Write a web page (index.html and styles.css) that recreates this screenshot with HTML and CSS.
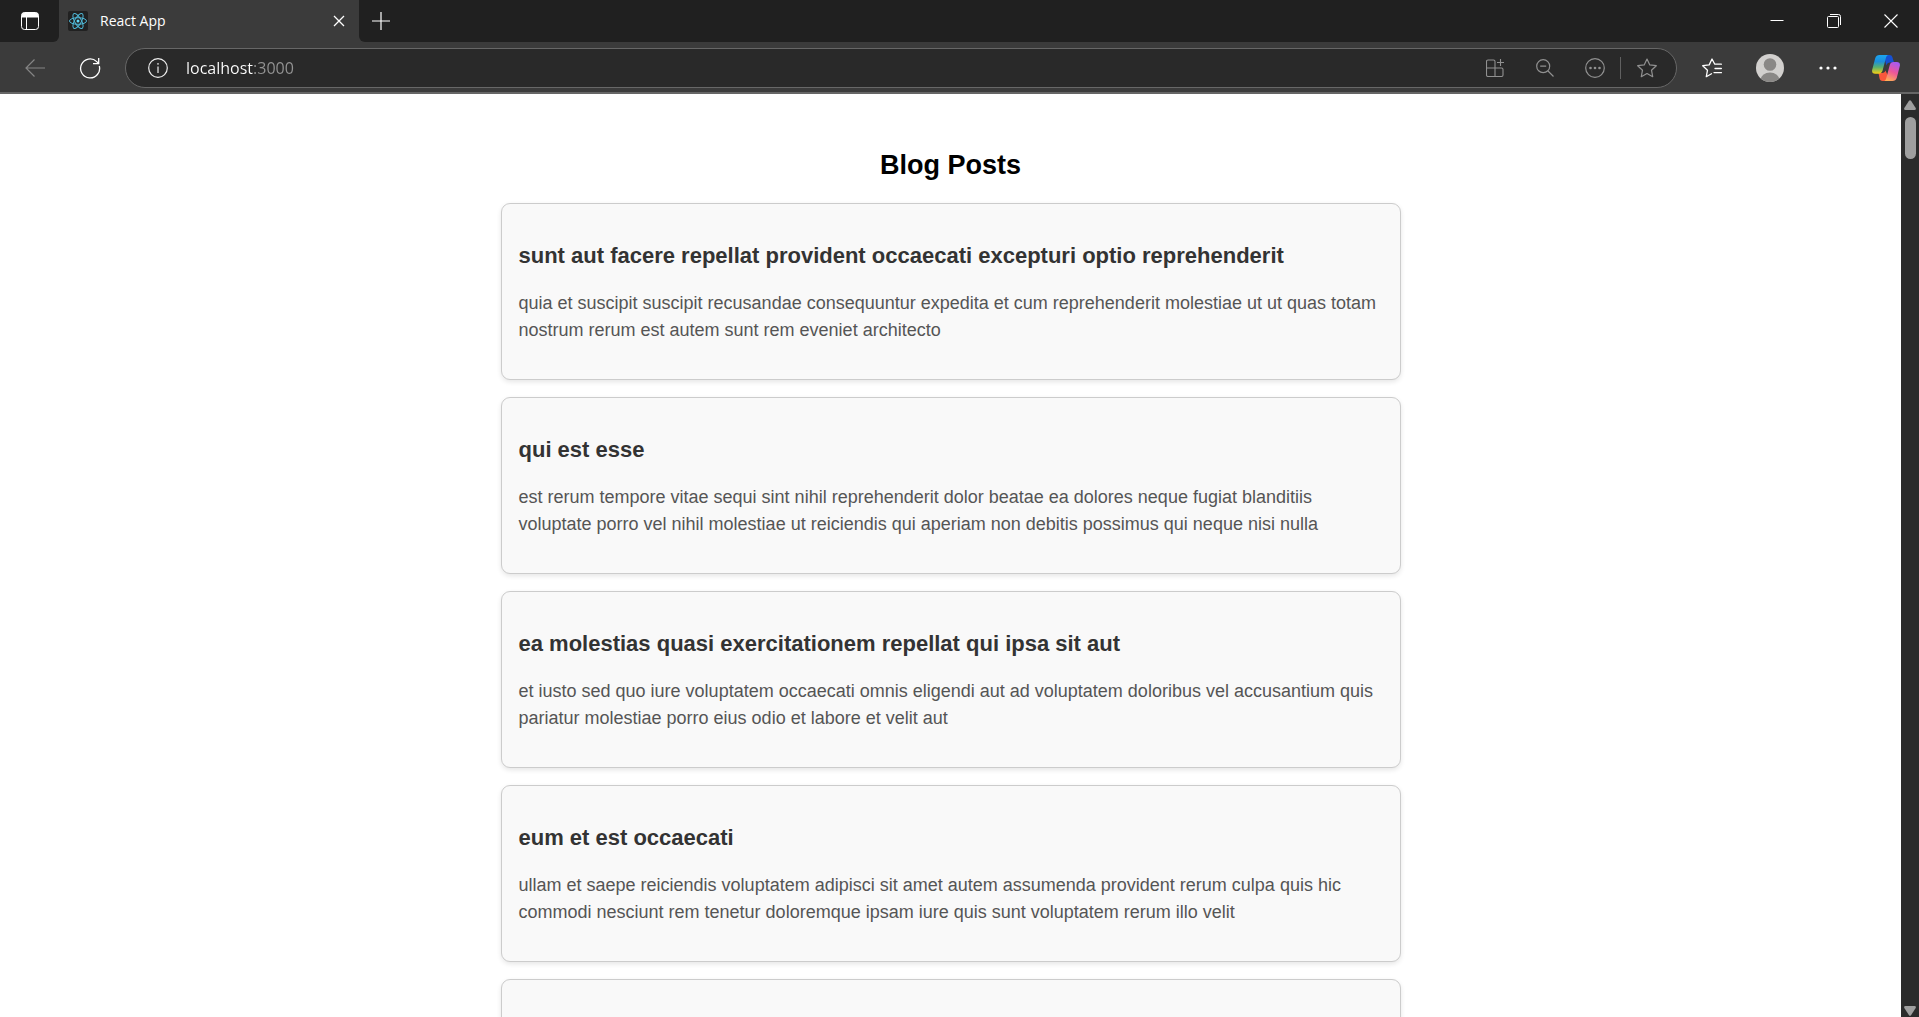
FILE: index.html
```html
<!DOCTYPE html>
<html lang="en">
<head>
<meta charset="utf-8">
<title>React App</title>
<link rel="stylesheet" href="styles.css">
</head>
<body>
<header class="chrome">
  <div class="tabbar">
    <button class="workspace" aria-label="Tab actions">
      <svg width="18" height="18" viewBox="0 0 18 18" fill="none" stroke="#fff"><rect x=".5" y=".5" width="17" height="17" rx="3"/><path d="M5.5 5v12"/><path d="M1 5V3a2 2 0 0 1 2-2h12a2 2 0 0 1 2 2v2z" fill="#fff"/></svg>
    </button>
    <div class="tab">
      <svg class="favicon" width="20" height="20" viewBox="0 0 20 20" fill="none" stroke="#4fb9d8"><rect width="20" height="20" rx="2" fill="#212121" stroke="none"/><ellipse cx="10" cy="10" rx="8.5" ry="3.3"/><ellipse cx="10" cy="10" rx="8.5" ry="3.3" transform="rotate(60 10 10)"/><ellipse cx="10" cy="10" rx="8.5" ry="3.3" transform="rotate(120 10 10)"/><circle cx="10" cy="10" r="1.5" fill="#61dafb" stroke="none"/></svg>
      <span class="tab-title">React App</span>
      <button class="tab-close" aria-label="Close tab">
        <svg width="12" height="12" viewBox="0 0 12 12" fill="none" stroke="#fff" stroke-width="1.3"><path d="M1 1l10 10M11 1L1 11"/></svg>
      </button>
    </div>
    <button class="new-tab" aria-label="New tab">
      <svg width="18" height="18" viewBox="0 0 18 18" fill="none" stroke="#fff" stroke-width="1.2"><path d="M9 0v18M0 9h18"/></svg>
    </button>
    <div class="window-controls">
      <button class="window-button" aria-label="Minimize"><svg width="14" height="14" viewBox="0 0 14 14" fill="none" stroke="#fff"><path d="M.5 6.5h13"/></svg></button>
      <button class="window-button" aria-label="Restore"><svg width="14" height="14" viewBox="0 0 14 14" fill="none" stroke="#fff"><rect x=".5" y="2.5" width="11" height="11" rx="1"/><path d="M3 .5h8.500a2 2 0 0 1 2 2V11"/></svg></button>
      <button class="window-button" aria-label="Close"><svg width="14" height="14" viewBox="0 0 14 14" fill="none" stroke="#fff" stroke-width="1.1"><path d="M.5.5l13 13M13.500.5l-13 13"/></svg></button>
    </div>
  </div>
  <div class="toolbar">
    <button class="nav-button" aria-label="Back" disabled><svg width="20" height="18" viewBox="0 0 20 18" fill="none" stroke="#858585" stroke-width="1.2"><path d="M20 9H1M9.500.5L1 9l8.500 8.500"/></svg></button>
    <button class="nav-button" aria-label="Refresh"><svg width="22" height="22" viewBox="0 0 22 22" fill="none" stroke="#fff" stroke-width="1.3"><path d="M20.300 9a9.500 9.500 0 1 1-2.600-4.400L19.700 6.500M19.700 1v5.700H14"/></svg></button>
    <div class="address">
      <svg width="20" height="20" viewBox="0 0 20 20" fill="none" stroke="#eee" stroke-width="1.2"><circle cx="10" cy="10" r="9.300"/><path d="M10 8.500V15M10 5v1.800"/></svg>
      <input class="url" type="text" aria-label="Address" value="localhost:3000">
      <div class="address-actions">
        <button class="address-button" aria-label="Install app"><svg width="18" height="18" viewBox="0 0 18 18" fill="none" stroke="#919191" stroke-width="1.100"><path d="M9 9V2.500a1.500 1.500 0 0 0-1.500-1.500H2A1.500 1.500 0 0 0 .5 2.500V16A1.500 1.500 0 0 0 2 17.500h13.500A1.500 1.500 0 0 0 17 16v-5.500A1.500 1.500 0 0 0 15.500 9H.5M9 9v8.500M14.500 0v7M11 3.500h7"/></svg></button>
        <button class="address-button" aria-label="Zoom"><svg width="18" height="18" viewBox="0 0 18 18" fill="none" stroke="#919191" stroke-width="1.200"><circle cx="7.200" cy="7.200" r="6.500"/><path d="M12 12l5.500 5.500M4.200 7.200h6"/></svg></button>
        <button class="address-button" aria-label="More page actions"><svg width="20" height="20" viewBox="0 0 20 20" fill="none" stroke="#919191" stroke-width="1.200"><circle cx="10" cy="10" r="9.300"/><g fill="#919191" stroke="none"><circle cx="5.500" cy="10" r="1.300"/><circle cx="10" cy="10" r="1.300"/><circle cx="14.500" cy="10" r="1.300"/></g></svg></button>
        <span class="divider"></span>
        <button class="address-button" aria-label="Add to favorites"><svg width="20" height="20" viewBox="0 0 20 20" fill="none" stroke="#919191" stroke-width="1.200" stroke-linejoin="round"><path d="M10 1l2.800 5.900 6.500.8-4.800 4.500 1.200 6.500L10 15.500l-5.700 3.200 1.200-6.500L.7 7.700l6.500-.8z"/></svg></button>
      </div>
    </div>
    <div class="tools">
      <button class="tool-button" aria-label="Favorites"><svg width="20" height="20" viewBox="0 0 20 20" fill="none" stroke="#fff" stroke-width="1.300" stroke-linejoin="round" stroke-linecap="round"><path d="M13.500 6.200L12.800 6.200 10 1 7.200 6.900l-6.500.8 4.800 4.500-1.200 6.500L9.500 15.800M13 6.200h6.400M13 10.500h6.400M12 14.600h7.400"/></svg></button>
      <button class="tool-button" aria-label="Profile"><svg width="28" height="28" viewBox="0 0 28 28"><defs><clipPath id="face"><circle cx="14" cy="14" r="14"/></clipPath></defs><g clip-path="url(#face)"><rect width="28" height="28" fill="#d2d0ce"/><circle cx="14" cy="10.500" r="6.300" fill="#8a8886"/><ellipse cx="14" cy="26" rx="9.500" ry="7.500" fill="#8a8886"/></g></svg></button>
      <button class="tool-button" aria-label="Settings and more"><svg width="18" height="4" viewBox="0 0 18 4" fill="#fff"><circle cx="2" cy="2" r="1.600"/><circle cx="9" cy="2" r="1.600"/><circle cx="16" cy="2" r="1.600"/></svg></button>
      <button class="tool-button" aria-label="Copilot"><svg width="28" height="26" viewBox="0 0 28 26"><defs><linearGradient id="cool" x1="0" y1="0" x2="0" y2="1"><stop offset="0" stop-color="#1ba5f0"/><stop offset=".35" stop-color="#1d8fdc"/><stop offset=".65" stop-color="#58b070"/><stop offset="1" stop-color="#f5d014"/></linearGradient><linearGradient id="warm" x1=".7" y1="0" x2=".3" y2="1"><stop offset="0" stop-color="#a65af2"/><stop offset=".5" stop-color="#ee5699"/><stop offset="1" stop-color="#ffae55"/></linearGradient></defs><path d="M12 0h5.500c1.600 0 2.500.8 3 2.500L22 7.500h-4c-2 0-3 1-3.600 3L13 5z" fill="#1650d2"/><path d="M15.500 26H10.500c-1.700 0-2.600-1-3-2.800L6.500 18H10c2 0 3-1 3.500-2.500L15.500 20z" fill="#f9583c"/><path d="M7.500 0h9.200c-1.700 0-2.400 1.500-2.900 3.200L10.600 15.500c-.6 2-1.800 3.200-3.800 3.200H3.200C.8 18.700-.4 17.200.2 14.700L3.200 3.200C4 1 5.300 0 7.500 0z" fill="url(#cool)"/><path d="M20.500 26h-8.800c1.700 0 2.200-1.500 2.700-3.200L17.700 10.300c.6-2 1.800-3.200 3.800-3.200h3.300c2.400 0 3.600 1.500 3 4l-3 11.700c-.8 2.200-2.100 3.200-4.300 3.200z" fill="url(#warm)"/></svg></button>
    </div>
  </div>
</header>
<div class="viewport">
  <main class="page">
    <h2 class="page-title">Blog Posts</h2>
    <div class="posts">
      <article class="post">
        <h3 class="post-title">sunt aut facere repellat provident occaecati excepturi optio reprehenderit</h3>
        <p class="post-body">quia et suscipit suscipit recusandae consequuntur expedita et cum reprehenderit molestiae ut ut quas totam nostrum rerum est autem sunt rem eveniet architecto</p>
      </article>
      <article class="post">
        <h3 class="post-title">qui est esse</h3>
        <p class="post-body">est rerum tempore vitae sequi sint nihil reprehenderit dolor beatae ea dolores neque fugiat blanditiis voluptate porro vel nihil molestiae ut reiciendis qui aperiam non debitis possimus qui neque nisi nulla</p>
      </article>
      <article class="post">
        <h3 class="post-title">ea molestias quasi exercitationem repellat qui ipsa sit aut</h3>
        <p class="post-body">et iusto sed quo iure voluptatem occaecati omnis eligendi aut ad voluptatem doloribus vel accusantium quis pariatur molestiae porro eius odio et labore et velit aut</p>
      </article>
      <article class="post">
        <h3 class="post-title">eum et est occaecati</h3>
        <p class="post-body">ullam et saepe reiciendis voluptatem adipisci sit amet autem assumenda provident rerum culpa quis hic commodi nesciunt rem tenetur doloremque ipsam iure quis sunt voluptatem rerum illo velit</p>
      </article>
      <article class="post post-next"></article>
    </div>
  </main>
  <div class="scrollbar">
    <svg width="12" height="10" viewBox="0 0 12 10" fill="#9f9f9f"><path d="M5 .8Q6-.4 7 .8l4.700 7.200q.7 2-1.200 2h-9q-1.900 0-1.200-2z"/></svg>
    <div class="thumb"></div>
    <svg class="scroll-down" width="12" height="10" viewBox="0 0 12 10" fill="#9f9f9f"><path d="M5 9.200q1 1.200 2 0L11.700 2q.7-2-1.200-2h-9Q-.4 0 .3 2z"/></svg>
  </div>
</div>
</body>
</html>
```
FILE: styles.css
```css
* { box-sizing: border-box; }

body {
  margin: 0;
  height: 100vh;
  display: flex;
  flex-direction: column;
  overflow: hidden;
  background: #fff;
  font-family: "Liberation Sans", Arial, sans-serif;
}

button {
  display: flex;
  align-items: center;
  justify-content: center;
  flex: none;
  padding: 0;
  border: 0;
  background: none;
}

svg { display: block; flex: none; }

/* Browser frame */
.chrome {
  flex: none;
  background: #3b3b3b;
  border-bottom: 2px solid #666;
  font-family: "Open Sans", "Noto Sans", sans-serif;
}

.tabbar {
  display: flex;
  height: 42px;
  background: #3b3b3b;
}

.workspace {
  width: 59px;
  background: #202020;
  border-bottom-right-radius: 6px;
}

.tab {
  display: flex;
  align-items: center;
  width: 300px;
  padding: 0 10px 0 9px;
  background: #3b3b3b;
}

.tab-title {
  flex: 1;
  margin-left: 12px;
  color: #fff;
  font-size: 14px;
  line-height: 20px;
}

.tab-close { width: 20px; height: 20px; }

.new-tab {
  width: 43px;
  background: #202020;
  border-bottom-left-radius: 6px;
}

.window-controls {
  display: flex;
  flex: 1;
  justify-content: flex-end;
  background: #202020;
}

.window-button { width: 57px; }

.toolbar {
  display: flex;
  align-items: center;
  height: 50px;
  padding: 2px 4px 0 7px;
}

.nav-button { width: 56px; height: 40px; }

.nav-button + .nav-button { width: 54px; }

.address {
  display: flex;
  flex: 1;
  align-items: center;
  height: 40px;
  margin-left: 8px;
  padding: 0 10px 0 22px;
  border: 1px solid #676767;
  border-radius: 20px;
  background: #292929;
}

.url {
  flex: 1;
  min-width: 0;
  height: 30px;
  margin-left: 18px;
  padding: 0;
  border: 0;
  outline: 0;
  color: transparent;
  background: linear-gradient(to right, #fff 67px, #949494 67px);
  background-clip: text;
  -webkit-background-clip: text;
  font: 16px/30px "Open Sans", "Noto Sans", sans-serif;
}

.address-actions { display: flex; align-items: center; }

.address-button { width: 38px; height: 32px; margin-left: 12px; }

.divider { width: 1px; height: 22px; margin-left: 6px; background: #606060; }

.divider + .address-button { margin-left: 7px; }

.tools { display: flex; margin-left: 6px; }

.tool-button { width: 58px; height: 40px; }

/* Page */
.viewport { display: flex; flex: 1; min-height: 0; }

.page {
  flex: 1;
  min-width: 0;
  overflow: hidden;
  padding: 56px 22px 0;
}

.page-title {
  margin: 0 0 22px;
  color: #000;
  font-size: 27px;
  line-height: 31px;
  text-align: center;
}

.posts {
  display: flex;
  flex-direction: column;
  gap: 17px;
  max-width: 900px;
  margin: 0 auto;
}

.post {
  padding: 17px;
  border: 1px solid #ccc;
  border-radius: 9px;
  background: #f9f9f9;
  box-shadow: 0 2px 5px rgba(0, 0, 0, 0.1);
}

.post-title {
  margin: 22px 0;
  color: #333;
  font-size: 22px;
  line-height: 25px;
}

.post-body {
  margin: 0 0 18px;
  color: #555;
  font-size: 18px;
  line-height: 27px;
}

.post-next { min-height: 177px; }

.scrollbar {
  display: flex;
  flex-direction: column;
  align-items: center;
  flex: none;
  width: 18px;
  padding: 6px 0 1px;
  background: #2b2b2b;
}

.thumb {
  width: 11px;
  height: 42px;
  margin-top: 7px;
  border-radius: 6px;
  background: #9f9f9f;
}

.scroll-down { margin-top: auto; }
```
